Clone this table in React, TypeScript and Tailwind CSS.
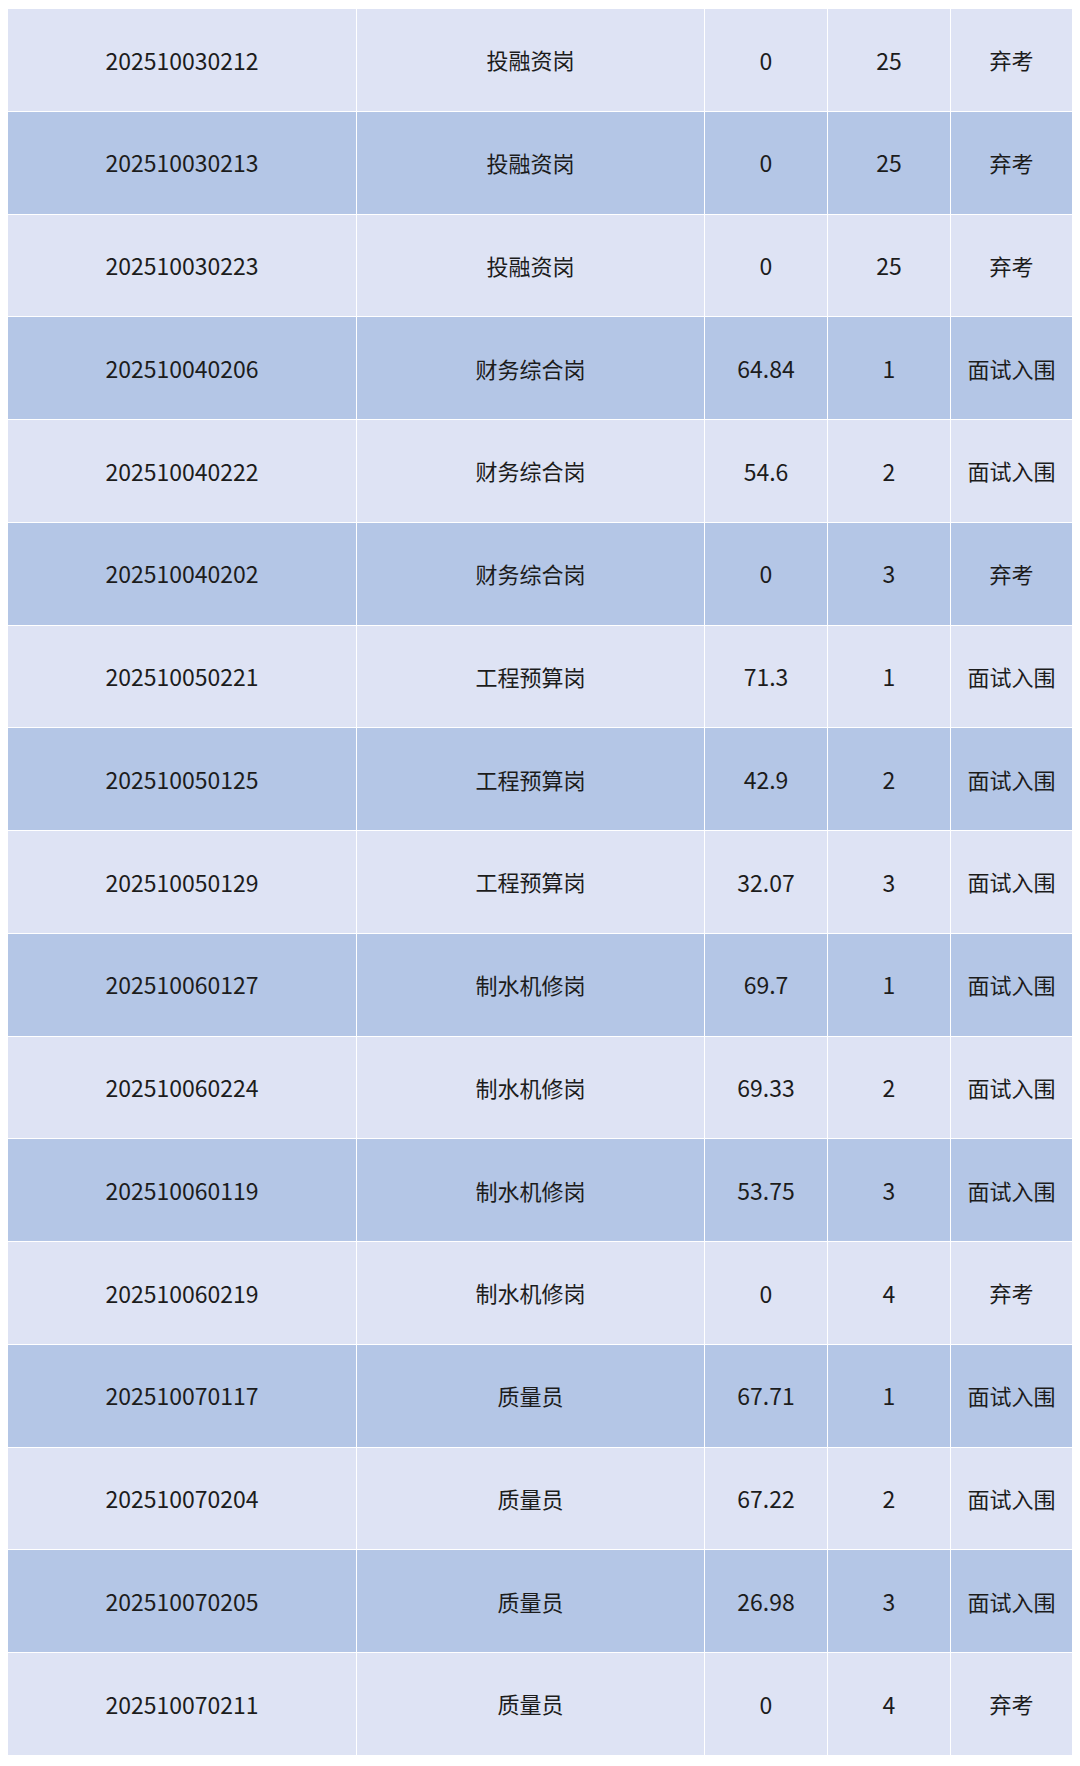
const ROWS: [string, string, string, string, string][] = [
  ["202510030212", "投融资岗", "0", "25", "弃考"],
  ["202510030213", "投融资岗", "0", "25", "弃考"],
  ["202510030223", "投融资岗", "0", "25", "弃考"],
  ["202510040206", "财务综合岗", "64.84", "1", "面试入围"],
  ["202510040222", "财务综合岗", "54.6", "2", "面试入围"],
  ["202510040202", "财务综合岗", "0", "3", "弃考"],
  ["202510050221", "工程预算岗", "71.3", "1", "面试入围"],
  ["202510050125", "工程预算岗", "42.9", "2", "面试入围"],
  ["202510050129", "工程预算岗", "32.07", "3", "面试入围"],
  ["202510060127", "制水机修岗", "69.7", "1", "面试入围"],
  ["202510060224", "制水机修岗", "69.33", "2", "面试入围"],
  ["202510060119", "制水机修岗", "53.75", "3", "面试入围"],
  ["202510060219", "制水机修岗", "0", "4", "弃考"],
  ["202510070117", "质量员", "67.71", "1", "面试入围"],
  ["202510070204", "质量员", "67.22", "2", "面试入围"],
  ["202510070205", "质量员", "26.98", "3", "面试入围"],
  ["202510070211", "质量员", "0", "4", "弃考"],
];

export default function App() {
  return (
    <div
      className="w-[1080px] h-[1766px] bg-white pt-[9px] pl-[8px]"
      style={{ fontFamily: '"Noto Sans CJK SC", "Noto Sans", sans-serif' }}
    >
      <div className="grid w-[1064px] grid-cols-[348px_347px_122px_122px_121px] gap-px bg-white">
        {ROWS.map((row, i) => {
          const bg = i % 2 === 0 ? "bg-[#dee3f4]" : "bg-[#b4c6e6]";
          return row.map((cell, j) => (
            <div
              key={`${i}-${j}`}
              className={`${bg} h-[101.75px] flex items-center justify-center text-[#1c1c1c] font-normal ${
                j === 1 || j === 4 ? "text-[22px]" : "text-[23px]"
              }`}
            >
              {cell}
            </div>
          ));
        })}
      </div>
    </div>
  );
}
